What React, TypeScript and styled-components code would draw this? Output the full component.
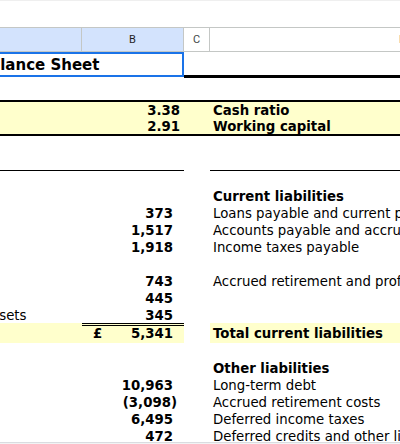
import React from "react";
import styled, { createGlobalStyle } from "styled-components";

const SCROLL = 140;
const COLS = `${82 + SCROLL}px 102px 26px 386px`;
const YELLOW = "#ffffcc";

const Global = createGlobalStyle`
  html, body { margin: 0; padding: 0; background: #ffffff; }
  body { font-family: "DejaVu Sans", Verdana, sans-serif; color: #000; }
  * { box-sizing: border-box; }
`;

const Viewport = styled.div`
  width: 400px;
  height: 444px;
  overflow: hidden;
  display: flex;
  flex-direction: column;
  background: #fff;
`;

const TopStrip = styled.div`
  flex: none;
  height: 27px;
  border-top: 1px solid #efefef;
`;

const Pane = styled.div`
  flex: 1;
  min-height: 0;
  overflow: hidden;
`;

const Sheet = styled.div`
  width: max-content;
  margin-left: -${SCROLL}px;
`;

const Footer = styled.div`
  flex: none;
  height: 2px;
  border-top: 1px solid #dadce0;
  background: #f1f3f4;
`;

const ColHeader = styled.div`
  display: grid;
  grid-template-columns: ${COLS};
  height: 25px;
  border-top: 1px solid #c4c7c5;
  border-bottom: 1px solid #c4c7c5;
`;

const HeadCell = styled.div<{ $sel?: boolean }>`
  display: flex;
  align-items: center;
  justify-content: center;
  border-right: 1px solid #c4c7c5;
  background: ${(p) => (p.$sel ? "#d3e3fd" : "#ffffff")};
  color: ${(p) => (p.$sel ? "#1f1f1f" : "#444746")};
  font-family: Roboto, "Liberation Sans", Arial, sans-serif;
  font-size: 11px;
`;

const Row = styled.div<{ $h: number }>`
  display: grid;
  grid-template-columns: ${COLS};
  height: ${(p) => p.$h}px;
`;

const Band = styled.div`
  background: ${YELLOW};
  border-top: 2px solid #000;
  border-bottom: 2px solid #000;
`;

const Cell = styled.div<{
  $bold?: boolean;
  $right?: boolean;
  $pl?: number;
  $pr?: number;
  $pb?: number;
  $fill?: boolean;
  $under?: string;
  $over?: string;
}>`
  display: flex;
  align-items: flex-end;
  justify-content: ${(p) => (p.$right ? "flex-end" : "flex-start")};
  padding: 0 ${(p) => p.$pr ?? 3}px ${(p) => p.$pb ?? 0}px ${(p) => p.$pl ?? 3}px;
  font-size: 13.3px;
  line-height: 15px;
  font-weight: ${(p) => (p.$bold ? 700 : 400)};
  white-space: nowrap;
  background: ${(p) => (p.$fill ? YELLOW : "transparent")};
  border-bottom: ${(p) => p.$under ?? "none"};
  border-top: ${(p) => p.$over ?? "none"};
`;

const TotalAmount = styled(Cell)`
  justify-content: space-between;
`;

const TitleCell = styled.div`
  grid-column: span 2;
  position: relative;
  display: flex;
  align-items: flex-end;
  padding: 0 3px 4px 3px;
  font-size: 15px;
  line-height: 18px;
  font-weight: 700;
  white-space: nowrap;
`;

const Selection = styled.div`
  position: absolute;
  left: 0;
  right: 0;
  top: 0;
  bottom: 1px;
  border: 2px solid #1a73e8;
  pointer-events: none;
`;

const THICK = "3px solid #000";
const THIN = "1px solid #000";

type Item = { a?: string; b?: string; d?: string; pl?: number };

const numPad = (v?: string) => (v && v.startsWith("(") ? 7 : 11);

function ItemRow({ a, b, d, pl }: Item) {
  return (
    <Row $h={17}>
      <Cell $pl={pl}>{a}</Cell>
      <Cell $bold $right $pr={numPad(b)}>
        {b}
      </Cell>
      <Cell />
      <Cell>{d}</Cell>
    </Row>
  );
}

const currentItems: Item[] = [
  { a: "Cash", b: "373", d: "Loans payable and current portion of long-term debt" },
  { a: "Receivables", b: "1,517", d: "Accounts payable and accrued expenses" },
  { a: "Inventories", b: "1,918", d: "Income taxes payable" },
  {},
  { a: "Prepaid expenses", b: "743", d: "Accrued retirement and profit sharing costs" },
  { a: "Deferred taxes", b: "445" },
  { a: "Other current assets", b: "345", pl: 30 },
];

const otherItems: Item[] = [
  { b: "10,963", d: "Long-term debt" },
  { b: "(3,098)", d: "Accrued retirement costs" },
  { b: "6,495", d: "Deferred income taxes" },
  { b: "472", d: "Deferred credits and other liabilities" },
];

export default function App() {
  return (
    <>
      <Global />
      <Viewport>
        <TopStrip />
        <Pane>
          <Sheet>
            <ColHeader>
              <HeadCell $sel>A</HeadCell>
              <HeadCell $sel>B</HeadCell>
              <HeadCell>C</HeadCell>
              <HeadCell>D</HeadCell>
            </ColHeader>

            <Row $h={26}>
              <TitleCell>
                Consolidated Balance Sheet
                <Selection />
              </TitleCell>
              <Cell $under={THICK} />
              <Cell $under={THICK} />
            </Row>

            <Row $h={22} />

            <Band>
              <Row $h={16}>
                <Cell $bold>Current ratio</Cell>
                <Cell $bold $right $pr={4}>
                  3.38
                </Cell>
                <Cell />
                <Cell $bold>Cash ratio</Cell>
              </Row>
              <Row $h={16}>
                <Cell $bold>Quick ratio</Cell>
                <Cell $bold $right $pr={4}>
                  2.91
                </Cell>
                <Cell />
                <Cell $bold>Working capital</Cell>
              </Row>
            </Band>

            <Row $h={17} />
            <Row $h={18}>
              <Cell $under={THIN} />
              <Cell $under={THIN} />
              <Cell />
              <Cell $under={THIN} />
            </Row>
            <Row $h={16} />

            <Row $h={17}>
              <Cell $bold>Current assets</Cell>
              <Cell />
              <Cell />
              <Cell $bold>Current liabilities</Cell>
            </Row>

            {currentItems.map((it, i) => (
              <ItemRow key={i} {...it} />
            ))}

            <Row $h={20}>
              <Cell $fill />
              <TotalAmount $fill $bold $pl={11} $pr={11} $pb={2} $over="3px double #000">
                <span>£</span>
                <span>5,341</span>
              </TotalAmount>
              <Cell />
              <Cell $fill $bold $pb={2}>
                Total current liabilities
              </Cell>
            </Row>

            <Row $h={16} />

            <Row $h={17}>
              <Cell />
              <Cell />
              <Cell />
              <Cell $bold>Other liabilities</Cell>
            </Row>

            {otherItems.map((it, i) => (
              <ItemRow key={i} {...it} />
            ))}
          </Sheet>
        </Pane>
        <Footer />
      </Viewport>
    </>
  );
}
